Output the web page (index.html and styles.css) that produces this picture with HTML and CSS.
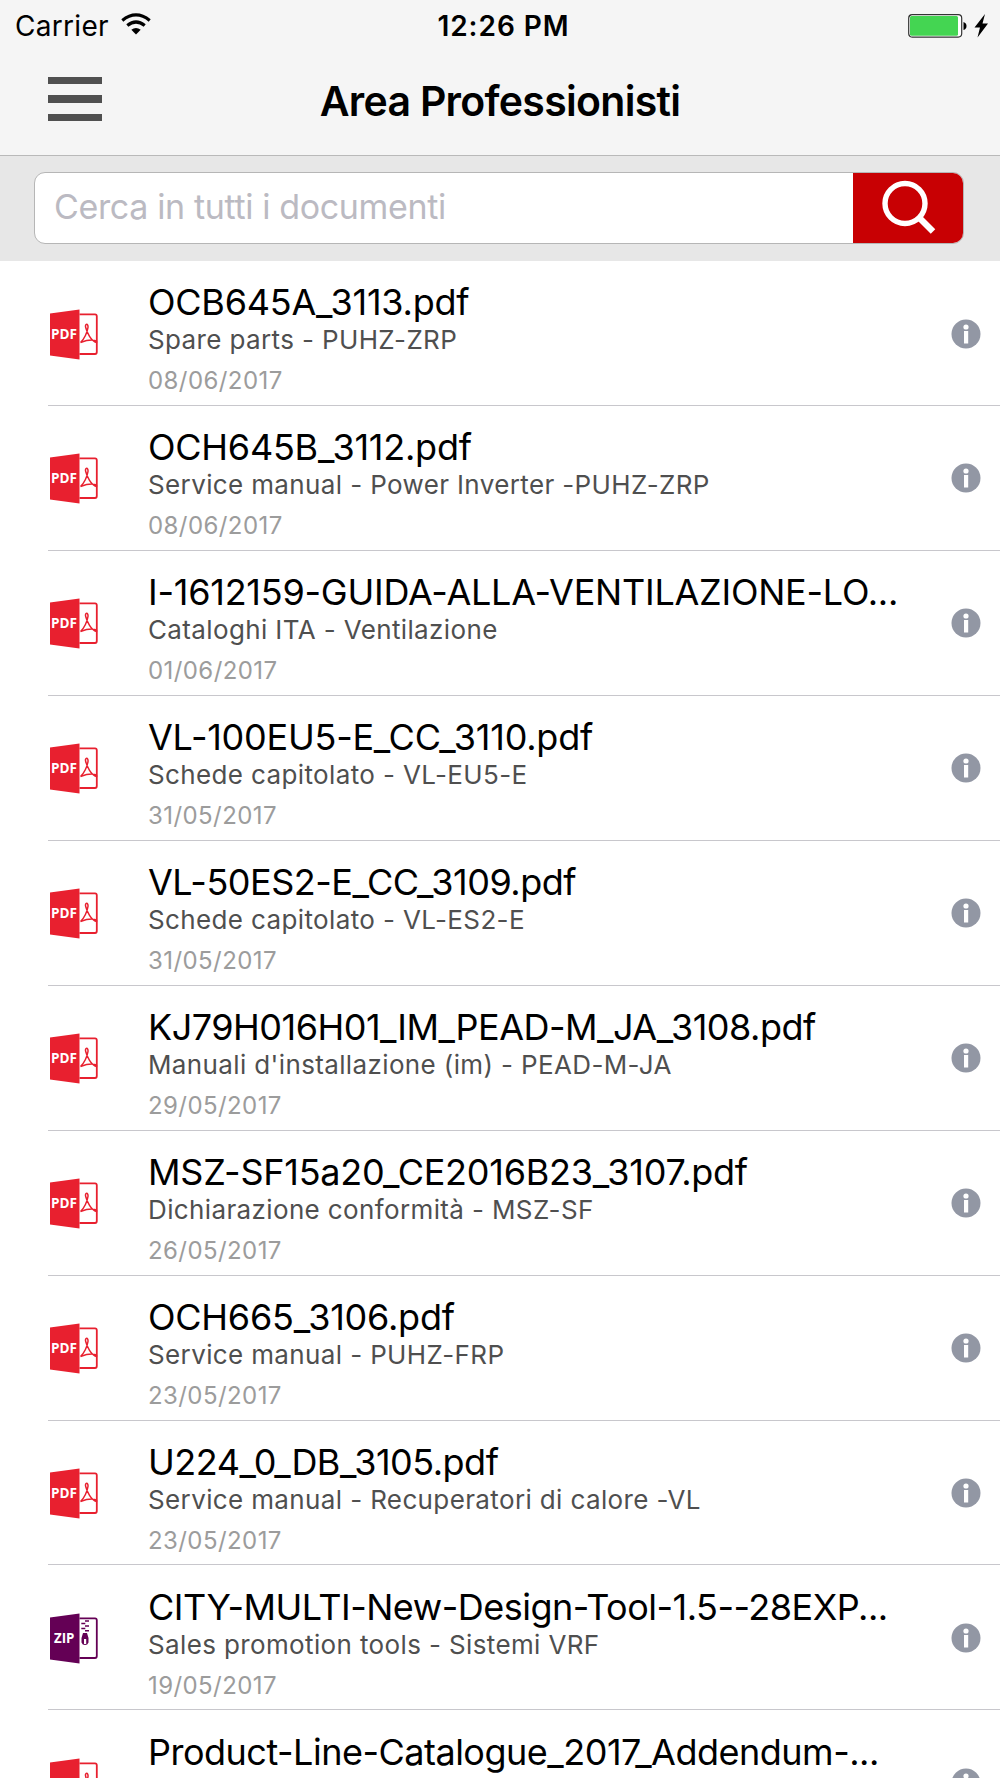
FILE: index.html
```html
<!DOCTYPE html>
<html lang="it">
<head>
<meta charset="utf-8">
<title>Area Professionisti</title>
<link rel="stylesheet" href="styles.css">
</head>
<body>
<svg class="sprite" aria-hidden="true">
  <symbol id="pdf" viewBox="0 0 49 51">
    <path d="M0 4.5 29.5 0.5V50.5L0 46.5Z" fill="#e8202f"/>
    <path d="M29.500 5.300H45Q46.800 5.300 46.800 7.300V43Q46.800 45 45 45H29.500" fill="none" stroke="#e8202f" stroke-width="1.800"/>
    <path d="M30.500 33.500C34 30.500 37.300 23.500 38 18.500C38.500 14 34.500 14.500 35.700 18.500C37 23.500 41 32 46.500 33.500C47.500 31 41 29.700 30.500 33.500" fill="none" stroke="#e8202f" stroke-width="1.500"/>
    <text x="1" y="29.600" class="kind" textLength="26" lengthAdjust="spacingAndGlyphs">PDF</text>
  </symbol>
  <symbol id="zip" viewBox="0 0 49 51">
    <path d="M0 4.500 29.500 0.500V50.500L0 46.500Z" fill="#640055"/>
    <path d="M29.500 5.300H45Q46.800 5.300 46.800 7.300V43Q46.800 45 45 45H29.500" fill="none" stroke="#640055" stroke-width="1.800"/>
    <path d="M35 8h4M31.300 10.500h4M35 13h4M31.300 15.500h4M35 17.700h4" stroke="#640055" stroke-width="1.500"/>
    <path fill-rule="evenodd" d="M33 20h4l1.500 5V29.500a3.700 3.700 0 0 1-7 0V25ZM34 26v5h2.200v-5Z" fill="#640055"/>
    <text x="4" y="30" class="kind" textLength="20.500" lengthAdjust="spacingAndGlyphs">ZIP</text>
  </symbol>
  <symbol id="info" viewBox="0 0 30 30">
    <circle cx="15" cy="15" r="14.500" fill="#9297a4"/>
    <circle cx="15" cy="8" r="2.600" fill="#fff"/>
    <rect x="13" y="12" width="4.200" height="12.500" fill="#fff"/>
  </symbol>
</svg>

<header class="top">
  <div class="status">
    <div class="carrier"><span>Carrier</span>
      <svg width="31" height="22" viewBox="0 0 31 22"><path d="M15 21.500 10.300 16.800Q15 13 19.700 16.800Z"/><path d="M6.300 12.600Q15 5.400 23.700 12.600M1.300 7.400Q15-3.600 28.700 7.400" fill="none" stroke="#000" stroke-width="3.200"/></svg>
    </div>
    <div class="time">12:26 PM</div>
    <div class="power">
      <svg width="80" height="24" viewBox="0 0 80 24"><rect x="0.700" y="0.700" width="53" height="22.400" rx="3.500" fill="#fff" stroke="#333" stroke-width="1.200"/><rect x="2" y="2" width="48" height="19.800" rx="1.500" fill="#44d552"/><path d="M55.500 8Q58.500 9 58.500 12T55.500 16Z"/><path d="M77 0 66.500 13.500H72L69.500 23.500 80 9.500H74.500Z"/></svg>
    </div>
  </div>
  <div class="nav">
    <button class="menu" aria-label="Menu"><i></i><i></i><i></i></button>
    <h1>Area Professionisti</h1>
  </div>
</header>

<div class="search">
  <div class="field">
    <span class="hint">Cerca in tutti i documenti</span>
    <button class="go" aria-label="Cerca"><svg width="56" height="56" viewBox="0 0 56 56" fill="none" stroke="#fff" stroke-width="5.400"><circle cx="23" cy="23.500" r="20"/><path d="M37.500 38 51 51.500" stroke-width="6.400"/></svg></button>
  </div>
</div>

<main class="list">
  <article class="row"><svg class="doc"><use href="#pdf"/></svg><div class="text"><h2>OCB645A_3113.pdf</h2><p>Spare parts - PUHZ-ZRP</p><time>08/06/2017</time></div><svg class="info"><use href="#info"/></svg></article>
  <article class="row"><svg class="doc"><use href="#pdf"/></svg><div class="text"><h2>OCH645B_3112.pdf</h2><p>Service manual - Power Inverter -PUHZ-ZRP</p><time>08/06/2017</time></div><svg class="info"><use href="#info"/></svg></article>
  <article class="row"><svg class="doc"><use href="#pdf"/></svg><div class="text"><h2>I-1612159-GUIDA-ALLA-VENTILAZIONE-LO...</h2><p>Cataloghi ITA - Ventilazione</p><time>01/06/2017</time></div><svg class="info"><use href="#info"/></svg></article>
  <article class="row"><svg class="doc"><use href="#pdf"/></svg><div class="text"><h2>VL-100EU5-E_CC_3110.pdf</h2><p>Schede capitolato - VL-EU5-E</p><time>31/05/2017</time></div><svg class="info"><use href="#info"/></svg></article>
  <article class="row"><svg class="doc"><use href="#pdf"/></svg><div class="text"><h2 class="tight">VL-50ES2-E_CC_3109.pdf</h2><p>Schede capitolato - VL-ES2-E</p><time>31/05/2017</time></div><svg class="info"><use href="#info"/></svg></article>
  <article class="row"><svg class="doc"><use href="#pdf"/></svg><div class="text"><h2 class="tight">KJ79H016H01_IM_PEAD-M_JA_3108.pdf</h2><p>Manuali d'installazione (im) - PEAD-M-JA</p><time>29/05/2017</time></div><svg class="info"><use href="#info"/></svg></article>
  <article class="row"><svg class="doc"><use href="#pdf"/></svg><div class="text"><h2>MSZ-SF15a20_CE2016B23_3107.pdf</h2><p>Dichiarazione conformità - MSZ-SF</p><time>26/05/2017</time></div><svg class="info"><use href="#info"/></svg></article>
  <article class="row"><svg class="doc"><use href="#pdf"/></svg><div class="text"><h2>OCH665_3106.pdf</h2><p>Service manual - PUHZ-FRP</p><time>23/05/2017</time></div><svg class="info"><use href="#info"/></svg></article>
  <article class="row"><svg class="doc"><use href="#pdf"/></svg><div class="text"><h2 class="tight">U224_0_DB_3105.pdf</h2><p>Service manual - Recuperatori di calore -VL</p><time>23/05/2017</time></div><svg class="info"><use href="#info"/></svg></article>
  <article class="row"><svg class="doc"><use href="#zip"/></svg><div class="text"><h2 class="tight">CITY-MULTI-New-Design-Tool-1.5--28EXP...</h2><p>Sales promotion tools - Sistemi VRF</p><time>19/05/2017</time></div><svg class="info"><use href="#info"/></svg></article>
  <article class="row"><svg class="doc"><use href="#pdf"/></svg><div class="text"><h2 class="tight">Product-Line-Catalogue_2017_Addendum-...</h2></div><svg class="info"><use href="#info"/></svg></article>
</main>
</body>
</html>
```
FILE: styles.css
```css
* { box-sizing: border-box; margin: 0; padding: 0; }
body { width: 1000px; height: 1778px; overflow: hidden; display: flex; flex-direction: column; background: #fff; color: #000; font-family: Inter, "Liberation Sans", sans-serif; }
button { border: 0; background: none; }
svg { display: block; flex: none; }
.sprite { display: none; }
.kind { font: 700 14px "Open Sans", sans-serif; fill: #fff; }

.top { flex: none; height: 156px; background: #f5f5f5; border-bottom: 1px solid #b9b9b9; }
.status { display: grid; grid-template-columns: 1fr auto 1fr; height: 50px; padding: 0 12px 0 15px; align-items: center; font-size: 28px; line-height: 50px; }
.carrier { display: flex; align-items: center; gap: 12px; padding-top: 1px; letter-spacing: .3px; }
.carrier svg { margin-top: -4px; }
.time { padding: 1px 0 0 4px; font-weight: 600; letter-spacing: .95px; }
.power { justify-self: end; }
.nav { display: grid; grid-template-columns: 150px 1fr 150px; height: 105px; align-items: center; }
.menu { display: flex; flex-direction: column; gap: 11px; width: 54px; margin: -7px 0 0 48px; }
.menu i { height: 7.500px; background: #505050; }
.nav h1 { margin-top: -3px; font-size: 41px; font-weight: 600; line-height: 50px; text-align: center; white-space: nowrap; letter-spacing: -.7px; }

.search { flex: none; height: 105px; padding: 16px 36px 17px 34px; background: #e7e7e7; }
.field { display: flex; height: 72px; border: 1px solid #b6b6b6; border-radius: 11px; background: #fff; overflow: hidden; }
.hint { flex: 1; padding-left: 19px; font-size: 34px; line-height: 68px; letter-spacing: -.36px; color: #bbbac2; white-space: nowrap; }
.go { width: 110px; padding-left: 4px; display: flex; align-items: center; justify-content: center; background: #c80003; }

.list { flex: 1; }
.row { display: flex; height: 144.940px; margin-left: 48px; padding-right: 19px; border-bottom: 1px solid #c8c7cc; }
.doc { width: 49px; height: 51px; margin: 47.500px 49px 0 2px; }
.text { flex: 1; min-width: 0; padding-top: 20.400px; white-space: nowrap; }
.text h2 { font-size: 36px; font-weight: 400; line-height: 42px; height: 42px; letter-spacing: -.24px; }
.text h2.tight { letter-spacing: -.5px; }
.text p { margin-top: 1px; font-size: 26px; line-height: 32px; letter-spacing: .37px; color: #4f4f4f; }
.text time { display: block; margin-top: 10px; font-size: 24px; line-height: 30px; letter-spacing: .42px; color: #9c9c9c; }
.info { width: 30px; height: 30px; margin-top: 57.500px; }
```
